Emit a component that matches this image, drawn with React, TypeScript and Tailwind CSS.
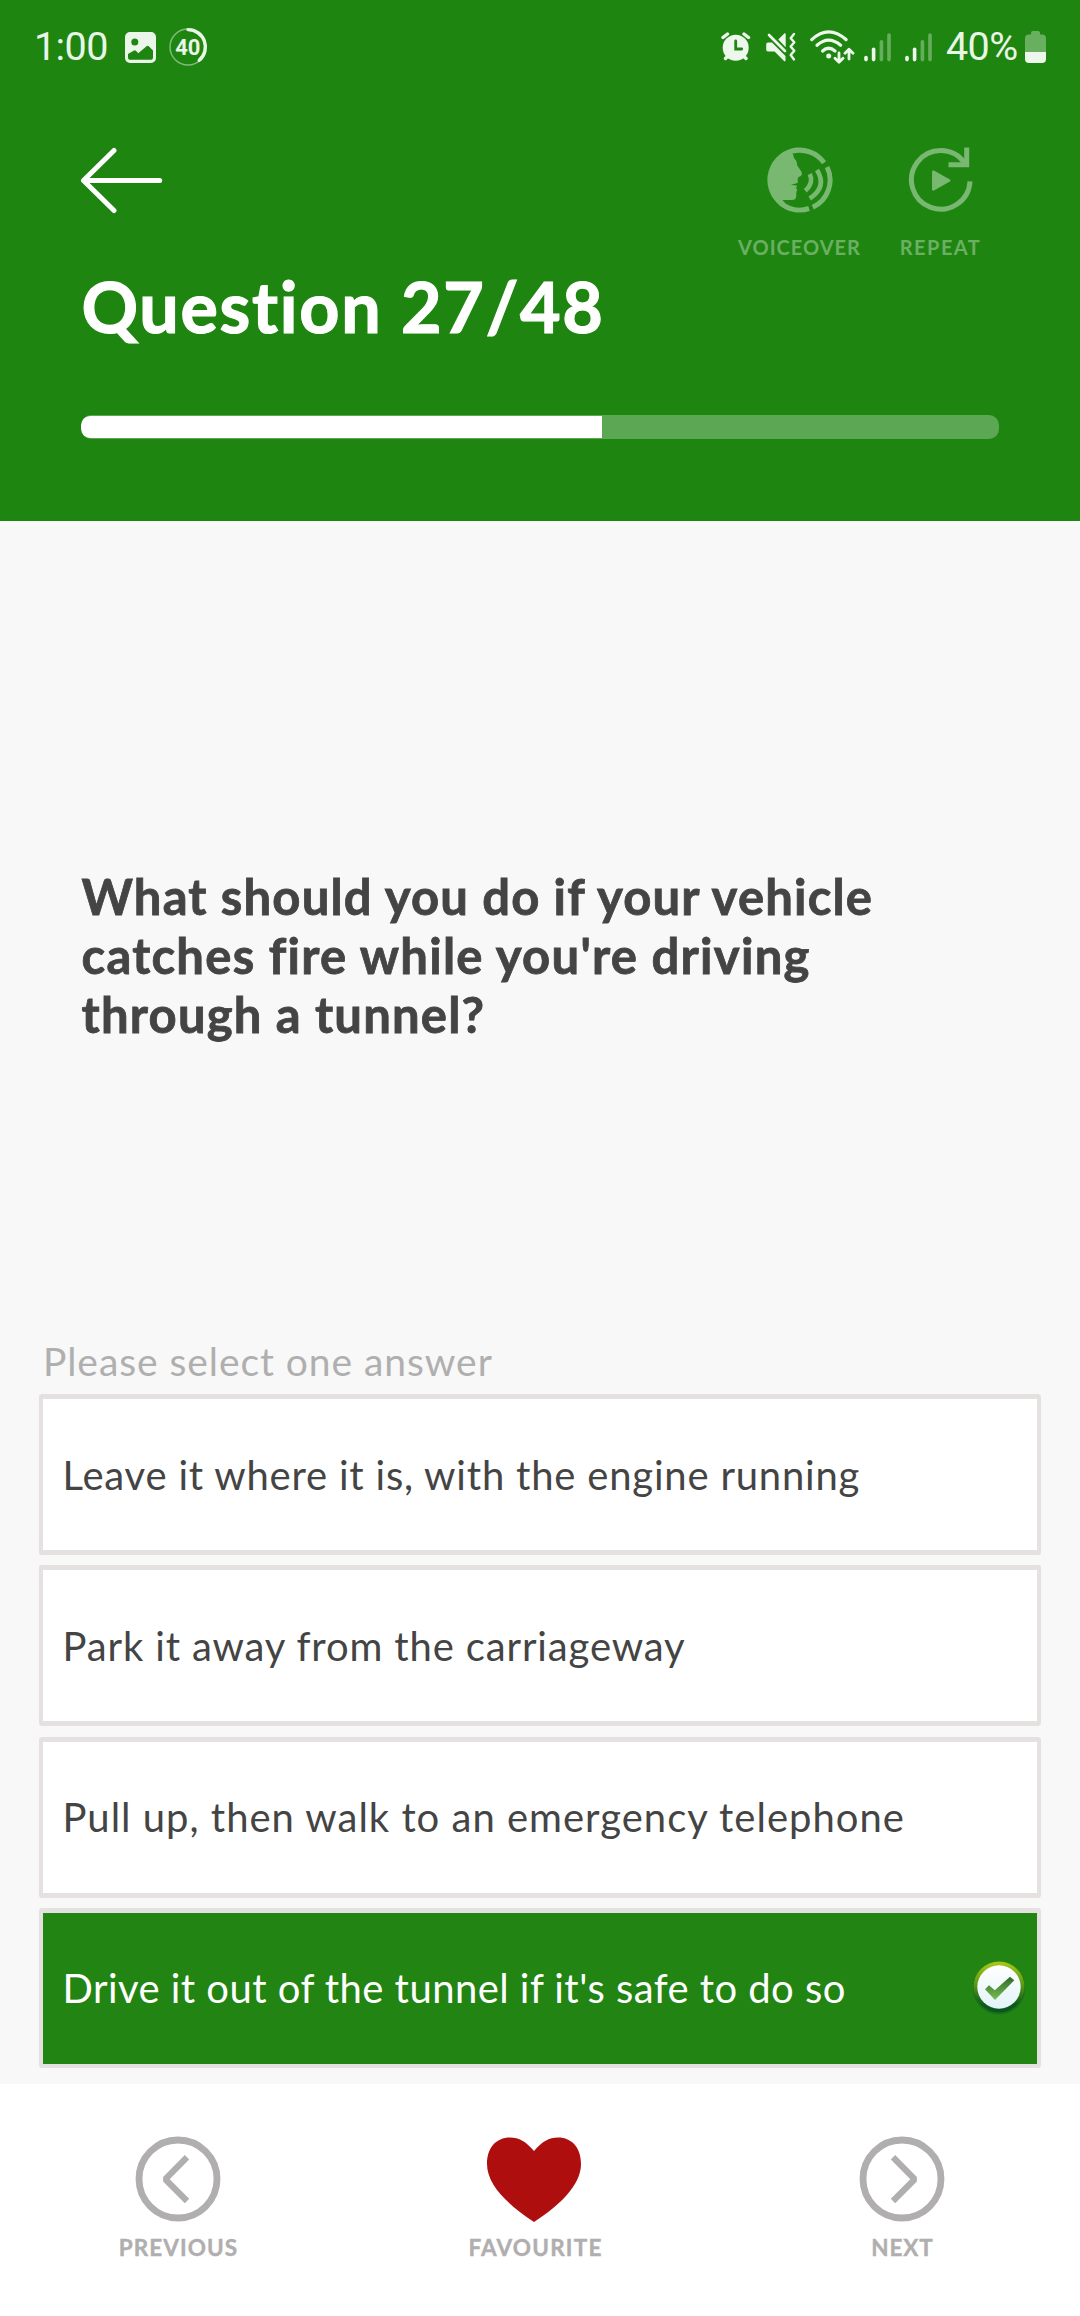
import React from "react";

const LATO = "font-[Lato,'Open_Sans',sans-serif]";

function SignalBars() {
  return (
    <svg className="h-[30px] w-[28px] shrink-0" viewBox="0 0 28 30">
      <g strokeLinecap="round" strokeWidth="3.6">
        <path d="M2 25.6v2" stroke="#f0f8ee" />
        <path d="M9.6 17.2v10.4" stroke="#f0f8ee" />
        <path d="M17.4 9.8v17.8M25 3v24.6" stroke="#67ad5e" />
      </g>
    </svg>
  );
}

function StatusBar() {
  return (
    <div className="flex h-[94px] items-center pl-[34px] pr-[34px] font-[Roboto,sans-serif] text-[39.5px] leading-[48px] text-[#e9f6e6]">
      <span className="w-[91px] whitespace-nowrap tracking-[-0.6px]">1:00</span>
      <svg className="h-[31px] w-[31px] shrink-0" viewBox="0 0 31 31">
        <path
          fillRule="evenodd"
          fill="#eaf6e8"
          d="M5 0h21a5 5 0 0 1 5 5v21a5 5 0 0 1-5 5H5a5 5 0 0 1-5-5V5a5 5 0 0 1 5-5ZM9.8 6.4a3.5 3.5 0 1 0 0 7 3.5 3.5 0 0 0 0-7ZM3 22v3.200a2.600 2.600 0 0 0 2.600 2.600h19.800a2.600 2.600 0 0 0 2.600-2.600V18.500l-4.200-4.200a1.600 1.600 0 0 0-2.300 0L13.300 21.200l-2.500-2.500a1.600 1.600 0 0 0-2.200 0Z"
        />
      </svg>
      <svg className="ml-[12px] h-[40px] w-[40px] shrink-0" viewBox="0 0 40 40">
        <circle cx="20" cy="20" r="18" fill="none" stroke="#7fbb78" strokeWidth="1.5" />
        <path d="M20 2.600A17.400 17.400 0 0 1 31.200 33.300" fill="none" stroke="#eaf6e8" strokeWidth="3.400" strokeLinecap="round" />
        <text x="19.8" y="28" textAnchor="middle" fontFamily="Roboto" fontWeight="700" fontSize="22" fill="#eaf6e8">40</text>
      </svg>

      <div className="ml-auto flex items-center">
        <svg className="h-[30px] w-[30px] shrink-0" viewBox="0 0 30 30">
          <path d="M2 5.500 6.500 2M23 2l4.500 3.500M4.500 26.500l3-3M25 26.500l-3-3" stroke="#eef7ec" strokeWidth="3.400" strokeLinecap="round" fill="none" />
          <circle cx="14.700" cy="15.800" r="13" fill="#eef7ec" />
          <path d="M14.700 9v8h6" stroke="#1f8411" strokeWidth="2.800" fill="none" strokeLinecap="round" />
        </svg>
        <svg className="ml-[15px] h-[30px] w-[31px] shrink-0" viewBox="0 0 31 30">
          <path d="M2 10.500h4L19.500 24v4.500a.8.8 0 0 1-1.200.700L8.500 19.500H2A1.800 1.800 0 0 1 .2 17.700v-5.400A1.800 1.800 0 0 1 2 10.500ZM12.300 7.500 18.300 1.600c.5-.5 1.400-.2 1.400.6v13Z" fill="#eef7ec" />
          <path d="M3 3 19 19" stroke="#eef7ec" strokeWidth="2.600" strokeLinecap="round" />
          <path d="M28 2l-3.300 4.300 3.600 4-3.600 4.300 3.600 4.200-3.600 4.300 3.300 4.300" fill="none" stroke="#eef7ec" strokeWidth="2.400" strokeLinecap="round" strokeLinejoin="round" />
        </svg>
        <svg className="ml-[13px] h-[34px] w-[46px] shrink-0" viewBox="0 0 46 34">
          <g fill="none" stroke="#eef7ec" strokeWidth="3.300" strokeLinecap="round">
            <path d="M1.800 9.600Q18.500-5.800 36 9.600" />
            <path d="M7 15.200Q18.500 5 30.600 15.200" />
            <path d="M12.600 21Q18.500 15.600 25 21" />
            <path d="M29 23v8.600M25 28.200l4 4 4-4M39 29v-9.500M35 23.200l4-4 4 4" strokeWidth="2.800" strokeLinejoin="round" />
          </g>
          <circle cx="18.700" cy="26" r="2.500" fill="#eef7ec" />
        </svg>
        <div className="ml-[8px] flex gap-[13px]">
          <SignalBars />
          <SignalBars />
        </div>
        <span className="ml-[13px] w-[79px] whitespace-nowrap tracking-[-0.6px]">40%</span>
        <svg className="h-[32px] w-[21px] shrink-0" viewBox="0 0 21 32">
          <path d="M6 3V2a2 2 0 0 1 2-2h5a2 2 0 0 1 2 2v1.600h2a4 4 0 0 1 4 4V21H0V7.600a4 4 0 0 1 4-4h2Z" fill="#69af60" />
          <path d="M0 21h21v7a4 4 0 0 1-4 4H4a4 4 0 0 1-4-4Z" fill="#eef7ec" />
        </svg>
      </div>
    </div>
  );
}

function BackArrow() {
  return (
    <svg className="mt-[51px] h-[70px] w-[84px] shrink-0" viewBox="80 145 84 70">
      <path d="M114 150.500 83.500 180.500 114 210.500M84 180.500H159.700" fill="none" stroke="#fff" strokeWidth="5" strokeLinecap="round" strokeLinejoin="round" />
    </svg>
  );
}

function VoiceoverIcon() {
  return (
    <svg className="h-[66px] w-[66px]" viewBox="766.500 147.500 66 66">
      <g fill="none" stroke="#78b870" strokeWidth="5">
        <path d="M791 151.800A30 30 0 0 1 823.600 163.200" />
        <path d="M826.600 167.500A30 30 0 0 1 812.300 207.700" />
        <path d="M808.500 209A30 30 0 0 1 780 203.500" />
        <path d="M809.300 174.500Q813.500 183.500 804.800 191.300" strokeWidth="4.600" />
        <path d="M816.500 170.500Q827 187.500 809.200 199" strokeWidth="4.600" />
      </g>
      <path
        fill="#78b870"
        d="M797 148.100A32.500 32.500 0 0 0 780 206.600L786 205.500 782 200.600H791.500Q795.800 200.500 795.800 196V192.500L796.800 190.500 795.500 188.500 796.800 186.300 790.500 185.300 797.200 183.500V179Q797.500 177.500 800.800 176Q802 174.500 800.800 172L796.500 165.500Q797.200 162 793.500 158.500Q793 155 791.500 153.500Z"
      />
    </svg>
  );
}

function RepeatIcon() {
  return (
    <svg className="h-[66px] w-[66px]" viewBox="906.500 147.500 66 66">
      <g fill="none" stroke="#78b870" strokeWidth="5">
        <path d="M963 163.200A29.300 29.300 0 1 0 968.500 181.800" />
        <path d="M965.200 148V165.200H947" />
      </g>
      <path d="M931.800 172.200 947.800 181 931.800 190Z" fill="#78b870" stroke="#78b870" strokeWidth="2.500" strokeLinejoin="round" />
    </svg>
  );
}

function HeaderAction({ label, className, children }: { label: string; className: string; children: React.ReactNode }) {
  return (
    <div className={`flex flex-col items-center ${className}`}>
      {children}
      <span className="mt-[22px] whitespace-nowrap text-[20px] font-bold leading-[24px] text-[#6bb062]">{label}</span>
    </div>
  );
}

function Header() {
  return (
    <header className="flex h-[521px] shrink-0 flex-col bg-[#1f8511]">
      <StatusBar />
      <div className="flex h-[172px] items-start pl-[80px]">
        <BackArrow />
        <div className="ml-auto mr-[99.500px] flex gap-[39px] pt-[53px]">
          <HeaderAction label="VOICEOVER" className="w-[124px] tracking-[1px]">
            <VoiceoverIcon />
          </HeaderAction>
          <HeaderAction label="REPEAT" className="w-[80px] tracking-[1.450px]">
            <RepeatIcon />
          </HeaderAction>
        </div>
      </div>
      <h1 className="whitespace-nowrap pl-[81.500px] text-[70px] font-bold leading-[80px] tracking-[1.700px] text-white [-webkit-text-stroke:1.2px_#fff]">
        Question 27/48
      </h1>
      <div className="ml-[81px] mt-[69px] h-[24px] w-[918px] overflow-hidden rounded-[10px] bg-[#5ca754] py-px">
        <div className="h-[22px] w-[521px] rounded-l-[9px] bg-white" />
      </div>
    </header>
  );
}

function CheckBadge() {
  return (
    <svg className="h-[56px] w-[54px] shrink-0" viewBox="0 0 54 56">
      <defs>
        <linearGradient id="ring" x1="0" y1="0" x2="0" y2="1">
          <stop offset="0" stopColor="#abc816" />
          <stop offset="0.45" stopColor="#5a9a16" />
          <stop offset="0.85" stopColor="#0b5a1c" />
          <stop offset="1" stopColor="#0b5224" />
        </linearGradient>
        <linearGradient id="disc" x1="0" y1="0" x2="0" y2="1">
          <stop offset="0" stopColor="#ffffff" />
          <stop offset="1" stopColor="#e2f3f8" />
        </linearGradient>
        <linearGradient id="tick" x1="0" y1="0" x2="0" y2="1">
          <stop offset="0" stopColor="#2f6a2c" />
          <stop offset="1" stopColor="#7abf50" />
        </linearGradient>
      </defs>
      <circle cx="27" cy="28.500" r="26" fill="#14641a" opacity="0.6" />
      <circle cx="27" cy="27" r="25.500" fill="url(#ring)" />
      <circle cx="27" cy="27" r="21.700" fill="url(#disc)" />
      <path d="M13 29.300 17 25.300 22.800 30.300 38 16.700 42.300 20.300 23 40Z" fill="url(#tick)" />
    </svg>
  );
}

const answers = [
  { text: "Leave it where it is, with the engine running", cls: "tracking-[0.800px]", box: "h-[161px]" },
  { text: "Park it away from the carriageway", cls: "tracking-[0.860px]", box: "h-[161px]" },
  { text: "Pull up, then walk to an emergency telephone", cls: "tracking-[1px]", box: "h-[161px]" },
  { text: "Drive it out of the tunnel if it's safe to do so", cls: "tracking-[0.450px]", box: "h-[160px]", selected: true },
];

function Answer({ text, cls, box, selected }: { text: string; cls: string; box: string; selected?: boolean }) {
  return (
    <button
      className={`flex w-full items-center justify-between rounded-[3px] border-x-4 border-t-[5px] border-[#e5e1e1] pl-[19.500px] pr-[11px] text-left ${box} ${
        selected ? "border-b-4 bg-[#228413] text-white" : "border-b-[5px] bg-white text-[#444]"
      }`}
    >
      <span className={`whitespace-nowrap text-[40px] leading-[48px] ${cls}`}>{text}</span>
      {selected && <CheckBadge />}
    </button>
  );
}

function Question() {
  return (
    <main className="flex h-[1563px] shrink-0 flex-col bg-[#f8f8f8] px-[39px]">
      <h2 className="mt-[346px] h-[177px] whitespace-nowrap pl-[42.500px] text-[49px] font-bold leading-[59px] text-[#444] [-webkit-text-stroke:0.8px_#444]">
        <span className="block tracking-[1.180px]">What should you do if your vehicle</span>
        <span className="block tracking-[1.270px]">catches fire while you're driving</span>
        <span className="block tracking-[1.200px]">through a tunnel?</span>
      </h2>
      <p className="mt-[292.500px] h-[57.500px] pl-[4px] text-[39px] leading-[48px] tracking-[0.930px] text-[#b0afaf]">Please select one answer</p>
      <div className="flex flex-col gap-[10.330px]">
        {answers.map((a) => (
          <Answer key={a.text} {...a} />
        ))}
      </div>
    </main>
  );
}

function CircleChevron({ flip }: { flip?: boolean }) {
  return (
    <svg className={`h-[86px] w-[86px] ${flip ? "-scale-x-100" : ""}`} viewBox="0 0 86 86">
      <circle cx="43" cy="43" r="39" fill="none" stroke="#b0aeae" strokeWidth="6.800" />
      <path d="M52 21.300 30.300 43.200 52 65" fill="none" stroke="#b0aeae" strokeWidth="6.200" strokeLinejoin="bevel" />
    </svg>
  );
}

function NavItem({ label, className, children }: { label: string; className: string; children: React.ReactNode }) {
  return (
    <button className={`flex w-[180px] flex-col items-center ${className}`}>
      {children}
      <span className="mt-[12px] pl-[1px] text-[22.500px] font-bold leading-[28px] text-[#b0aeae] [-webkit-text-stroke:0.4px_#b0aeae]">{label}</span>
    </button>
  );
}

function BottomNav() {
  return (
    <nav className="flex h-[232px] items-start bg-white pl-[88px] pt-[52px]">
      <NavItem label="PREVIOUS" className="tracking-[1.070px]">
        <CircleChevron />
      </NavItem>
      <NavItem label="FAVOURITE" className="ml-[177px] tracking-[1.210px]">
        <svg className="relative -left-[1px] h-[86px] w-[96px]" viewBox="486 2136 96 86">
          <path
            d="M534 2151C526 2141.500 519 2137.500 510 2137.500 496 2137.500 487 2148 487 2164 487 2185 508 2205 534 2222 560 2205 581 2185 581 2164 581 2148 572 2137.500 558 2137.500 549 2137.500 542 2141.500 534 2151Z"
            fill="#af0e0e"
          />
        </svg>
      </NavItem>
      <NavItem label="NEXT" className="ml-[187px] tracking-[0.880px]">
        <CircleChevron flip />
      </NavItem>
    </nav>
  );
}

export default function App() {
  return (
    <div className={`flex h-[2316px] w-[1080px] flex-col overflow-hidden ${LATO}`}>
      <Header />
      <Question />
      <BottomNav />
    </div>
  );
}
